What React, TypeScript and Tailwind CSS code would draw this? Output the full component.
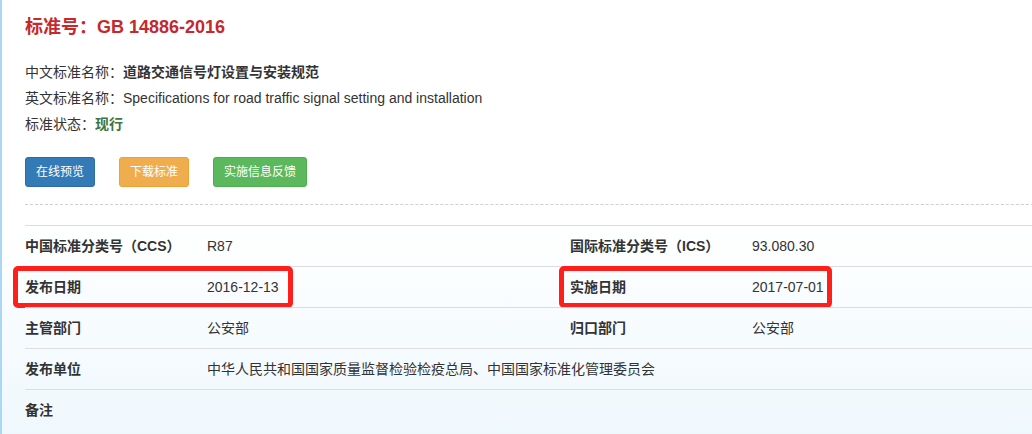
const font = { fontFamily: '"Liberation Sans", "Noto Sans CJK SC", sans-serif' }

type Cell = { label: string; value: string; boxed?: boolean }

const rows: Cell[][] = [
  [
    { label: '中国标准分类号（CCS）', value: 'R87' },
    { label: '国际标准分类号（ICS）', value: '93.080.30' },
  ],
  [
    { label: '发布日期', value: '2016-12-13', boxed: true },
    { label: '实施日期', value: '2017-07-01', boxed: true },
  ],
  [
    { label: '主管部门', value: '公安部' },
    { label: '归口部门', value: '公安部' },
  ],
  [{ label: '发布单位', value: '中华人民共和国国家质量监督检验检疫总局、中国国家标准化管理委员会' }],
  [{ label: '备注', value: '' }],
]

export default function App() {
  return (
    <div
      className="w-full h-[434px] overflow-hidden border-l-2 border-[#a9d7f5] bg-[linear-gradient(to_bottom,#ffffff_50%,#eff8fd)] text-[#333]"
      style={font}
    >
      <div className="w-[1212px] pl-[23px] pt-[14px]">
        <h1 className="text-[18px] leading-[26px] font-bold text-[#c6282b]">标准号：GB 14886-2016</h1>

        <div className="mt-[19px] text-[14px] leading-[26px]">
          <p>
            中文标准名称：<span className="font-bold">道路交通信号灯设置与安装规范</span>
          </p>
          <p>英文标准名称：Specifications for road traffic signal setting and installation</p>
          <p>
            标准状态：<span className="font-bold text-[#3c763d]">现行</span>
          </p>
        </div>

        <div className="mt-[20px] flex gap-[24px] text-[12px] text-white">
          <button className="h-[30px] px-[10px] rounded-[3px] bg-[#337ab7] border border-[#2e6da4]">在线预览</button>
          <button className="h-[30px] px-[10px] rounded-[3px] bg-[#f0ad4e] border border-[#eea236]">下载标准</button>
          <button className="h-[30px] px-[10px] rounded-[3px] bg-[#5cb85c] border border-[#4cae4c]">实施信息反馈</button>
        </div>

        <div className="mt-[17px] border-t border-dashed border-[#cfcfcf]" />

        <div className="mt-[20px] text-[14px]">
          {rows.map((row, i) => (
            <div key={i} className="relative flex h-[41px] items-center border-t border-[#dddddd]">
              {row.map((c, j) => (
                <div key={j} className={`relative flex items-center h-full ${row.length === 1 ? 'w-full' : j === 0 ? 'w-[545px]' : 'flex-1'}`}>
                  <span className="w-[182px] shrink-0 font-bold">{c.label}</span>
                  <span>{c.value}</span>
                  {c.boxed && (
                    <div
                      className={`absolute top-[-1px] h-[42px] rounded-[5px] border-[5px] border-[#ff1f1a] ${
                        j === 0 ? 'left-[-12px] w-[280px]' : 'left-[-11px] w-[273px]'
                      }`}
                    />
                  )}
                </div>
              ))}
            </div>
          ))}
        </div>
      </div>
    </div>
  )
}
